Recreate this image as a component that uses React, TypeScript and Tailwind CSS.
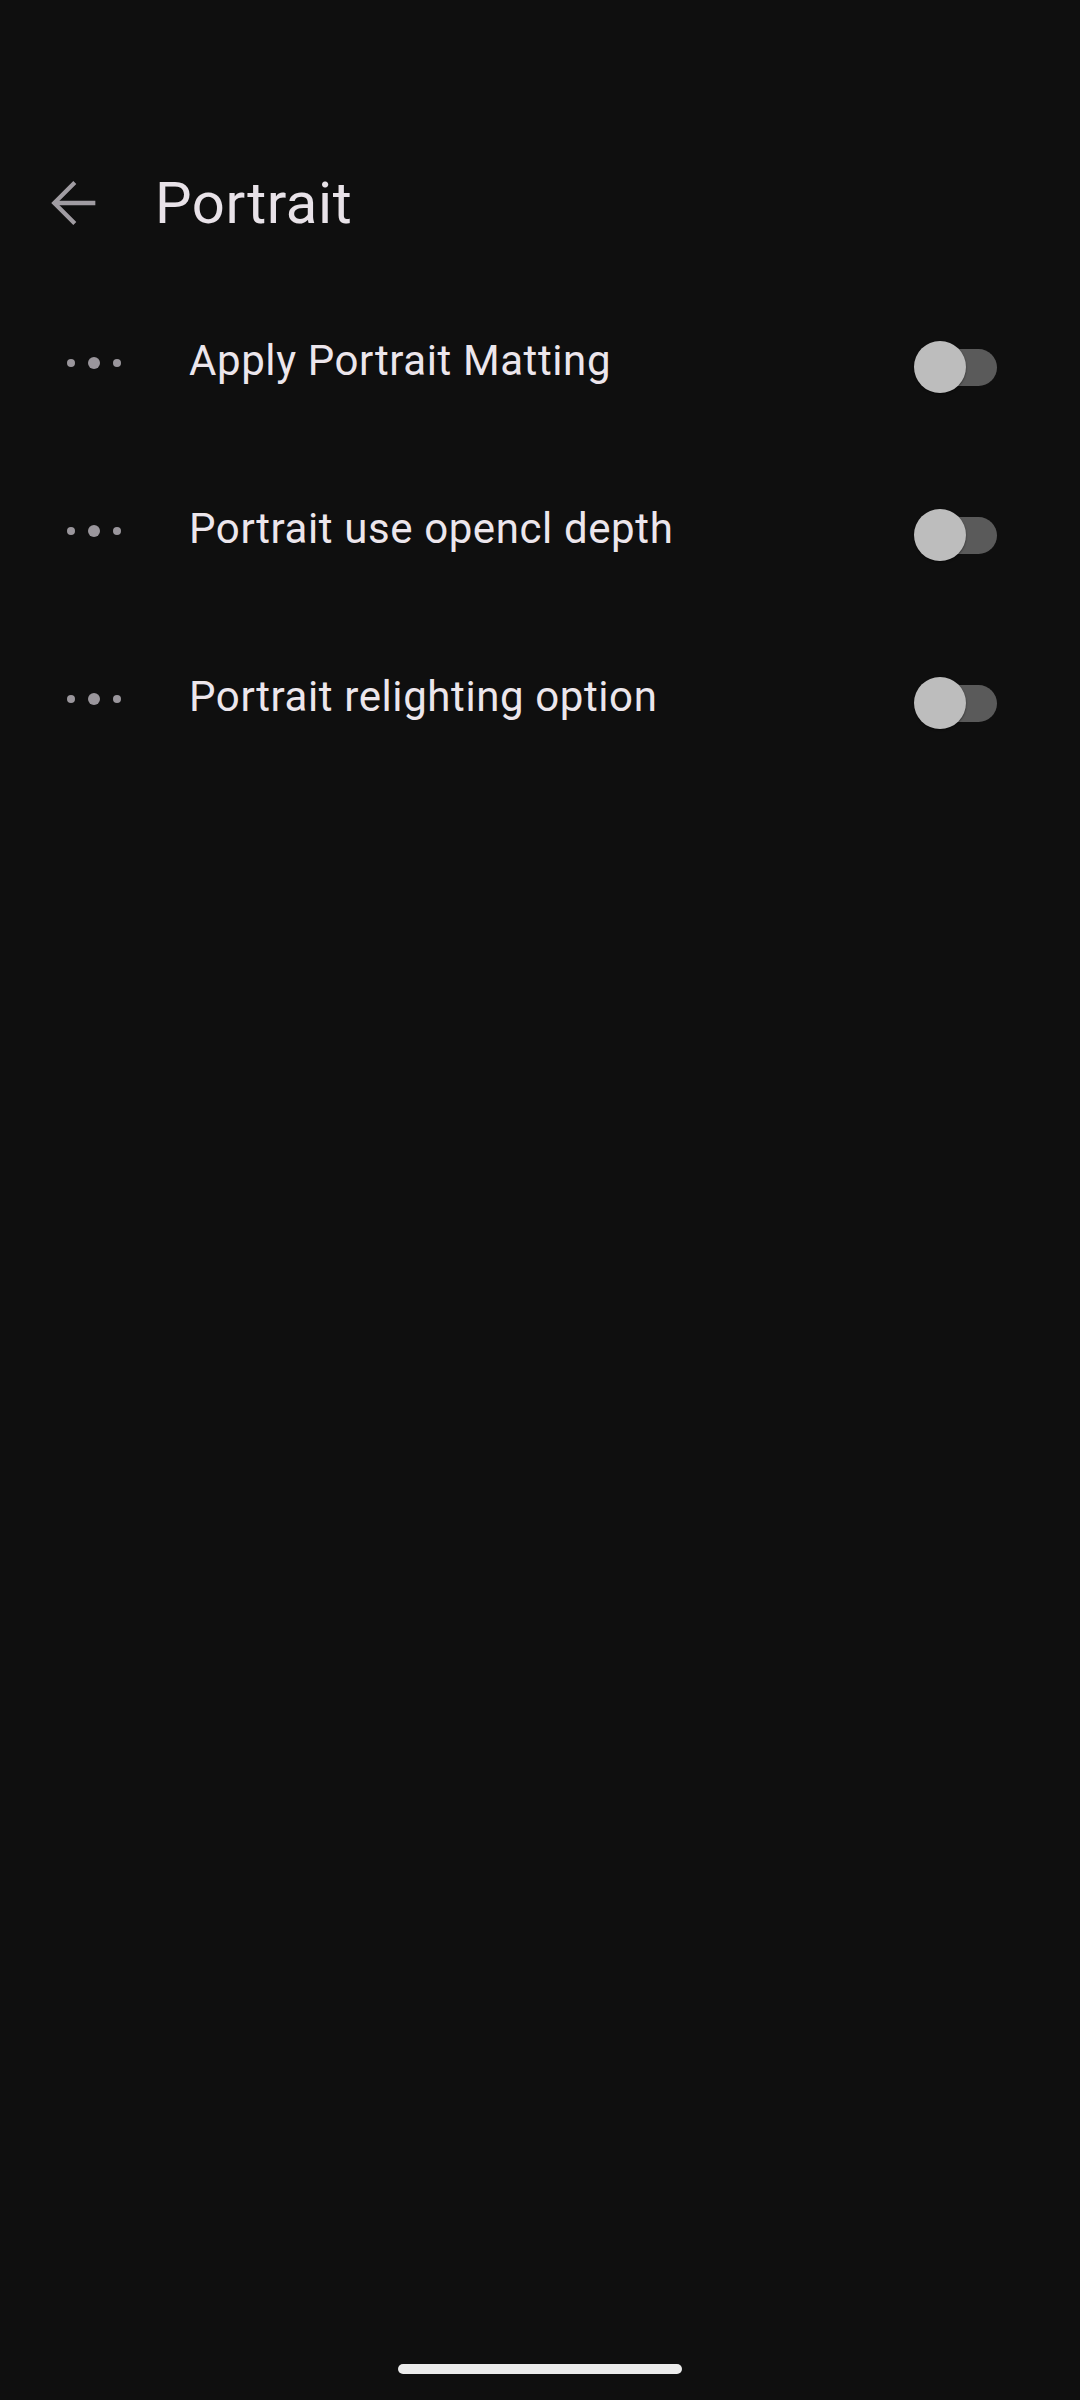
import React from "react";

const rows = [
  "Apply Portrait Matting",
  "Portrait use opencl depth",
  "Portrait relighting option",
];

function Dots() {
  return (
    <div className="flex items-center gap-[13px] pl-[67px] shrink-0">
      <div className="w-[8px] h-[8px] rounded-full bg-[#9a969c]" />
      <div className="w-[12px] h-[12px] rounded-full bg-[#9a969c]" />
      <div className="w-[8px] h-[8px] rounded-full bg-[#9a969c]" />
    </div>
  );
}

function Toggle() {
  return (
    <div className="relative w-[83px] h-[52px] mr-[83px] mt-[7px] shrink-0">
      <div className="absolute right-0 top-[8px] w-[60px] h-[37px] rounded-full bg-[#5a5a5a]" />
      <div className="absolute left-0 top-0 w-[52px] h-[52px] rounded-full bg-[#bdbdbd] shadow-[0_1px_2px_rgba(0,0,0,0.5)]" />
    </div>
  );
}

export default function App() {
  return (
    <div
      className="w-[1080px] h-[2400px] bg-[#0f0f0f] flex flex-col"
      style={{ fontFamily: "Roboto, 'Noto Sans', sans-serif" }}
    >
      <div className="pt-[127px] h-[279px] flex items-center">
        <div className="h-[152px] w-full flex items-center">
          <svg
            className="ml-[42px] shrink-0"
            width="64"
            height="64"
            viewBox="0 0 24 24"
            fill="none"
            stroke="#a09ca2"
            strokeWidth="1.6"
            strokeLinecap="butt"
            strokeLinejoin="miter"
          >
            <path d="M20 12H5.2" />
            <path d="M12.3 4.3L4.6 12l7.7 7.7" />
          </svg>
          <div className="ml-[49px] text-[58px] leading-none text-[#e8e2e8] tracking-[0.6px]">
            Portrait
          </div>
        </div>
      </div>
      {rows.map((r) => (
        <div key={r} className="h-[168px] flex items-center">
          <Dots />
          <div className="ml-[68px] flex-1 text-[42px] leading-none text-[#ece6ec] tracking-[0.6px] mb-[4px]">
            {r}
          </div>
          <Toggle />
        </div>
      ))}
      <div className="mt-auto pb-[26px] flex justify-center">
        <div className="w-[284px] h-[10px] rounded-full bg-[#ebebeb]" />
      </div>
    </div>
  );
}
